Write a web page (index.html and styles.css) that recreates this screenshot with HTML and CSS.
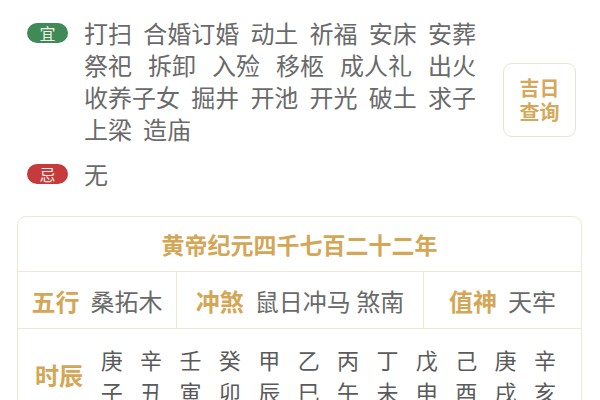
FILE: index.html
```html
<!DOCTYPE html>
<html lang="zh-CN">
<head>
<meta charset="utf-8">
<link rel="stylesheet" href="styles.css">
</head>
<body>
<div class="top">
  <div class="left">
    <div class="yi-row">
      <span class="badge badge-yi">宜</span>
      <div class="words">
        <div class="line just"><span>打扫</span><span>合婚订婚</span><span>动土</span><span>祈福</span><span>安床</span><span>安葬</span></div>
        <div class="line just"><span>祭祀</span><span>拆卸</span><span>入殓</span><span>移柩</span><span>成人礼</span><span>出火</span></div>
        <div class="line just"><span>收养子女</span><span>掘井</span><span>开池</span><span>开光</span><span>破土</span><span>求子</span></div>
        <div class="line last"><span>上梁</span><span>造庙</span></div>
      </div>
    </div>
    <div class="ji-row">
      <span class="badge badge-ji">忌</span>
      <div class="words"><div class="line">无</div></div>
    </div>
  </div>
  <div class="jiri"><span>吉日</span><span>查询</span></div>
</div>

<div class="table">
  <div class="tb-head">黄帝纪元四千七百二十二年</div>
  <div class="tb-row2">
    <div class="cell"><span class="lbl">五行</span><span class="val">桑拓木</span></div>
    <div class="cell"><span class="lbl">冲煞</span><span class="val">鼠日冲马 煞南</span></div>
    <div class="cell"><span class="lbl">值神</span><span class="val">天牢</span></div>
  </div>
  <div class="tb-row3">
    <div class="lbl shichen">时辰</div>
    <div class="gz">
      <span>庚</span><span>辛</span><span>壬</span><span>癸</span><span>甲</span><span>乙</span><span>丙</span><span>丁</span><span>戊</span><span>己</span><span>庚</span><span>辛</span>
      <span>子</span><span>丑</span><span>寅</span><span>卯</span><span>辰</span><span>巳</span><span>午</span><span>未</span><span>申</span><span>酉</span><span>戌</span><span>亥</span>
    </div>
  </div>
</div>
</body>
</html>
```

FILE: styles.css
```css
html, body {
  margin: 0;
  padding: 0;
  background: #ffffff;
}
body {
  font-family: "Noto Sans CJK SC", "Noto Sans", sans-serif;
  color: #6a6a6a;
  width: 600px;
  height: 400px;
  overflow: hidden;
}
.top {
  display: flex;
  padding: 17px 24px 0 27px;
}
.left {
  display: flex;
  flex-direction: column;
}
.yi-row, .ji-row {
  display: flex;
  align-items: flex-start;
}
.ji-row {
  margin-top: 13px;
}
.badge {
  width: 41px;
  height: 20px;
  border-radius: 10px;
  margin-top: 6px;
  margin-right: 16px;
  color: #f3efe6;
  font-size: 16px;
  line-height: 20px;
  text-align: center;
  flex: none;
}
.badge-yi { background: #3f8a57; }
.badge-ji { background: #c73a3b; }
.words {
  width: 392px;
  font-size: 24px;
}
.line {
  height: 32px;
  line-height: 32px;
  white-space: nowrap;
}
.just {
  display: flex;
  justify-content: space-between;
}
.last {
  display: flex;
  gap: 11px;
}
.jiri {
  margin-left: auto;
  margin-top: 46px;
  width: 71px;
  height: 72px;
  border: 1px solid #ebe3cf;
  border-radius: 9px;
  color: #d6a85a;
  font-weight: 700;
  font-size: 20px;
  line-height: 24px;
  display: flex;
  flex-direction: column;
  align-items: center;
  justify-content: center;
}
.table {
  margin: 26px 18px 0 17px;
  border: 1px solid #eee7d6;
  border-radius: 9px;
  height: 220px;
}
.tb-head {
  height: 54px;
  line-height: 54px;
  border-bottom: 1px solid #eee7d6;
  text-align: center;
  color: #d4a656;
  font-weight: 700;
  font-size: 23px;
}
.tb-row2 {
  display: grid;
  grid-template-columns: 158px 247px 158px;
  height: 56px;
  border-bottom: 1px solid #eee7d6;
}
.cell {
  display: flex;
  align-items: center;
  justify-content: center;
  gap: 11px;
  font-size: 24px;
}
.cell + .cell {
  border-left: 1px solid #eee7d6;
}
.lbl {
  color: #d4a656;
  font-weight: 700;
  font-size: 24px;
}
.val {
  color: #6a6a6a;
}
.tb-row3 {
  display: flex;
  align-items: center;
  padding: 14px 0 0 17px;
  height: 64px;
}
.shichen {
  width: 50px;
  margin-right: 7px;
  line-height: 32px;
}
.gz {
  display: grid;
  grid-template-columns: repeat(12, 39.4px);
  grid-auto-rows: 32px;
  font-size: 22px;
  line-height: 32px;
  color: #5a5a5a;
  text-align: center;
}
```
